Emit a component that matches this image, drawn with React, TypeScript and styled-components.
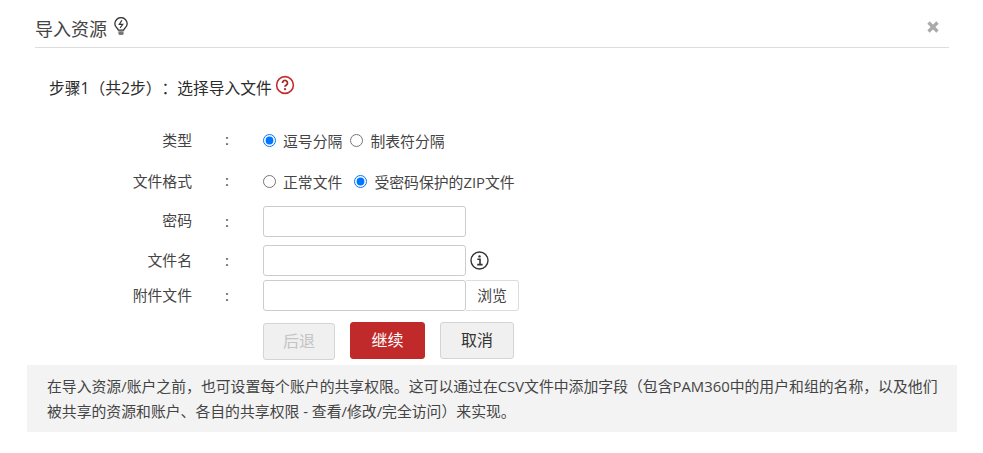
import React from "react";
import styled, { createGlobalStyle } from "styled-components";

const Global = createGlobalStyle`
  html, body { margin: 0; padding: 0; background: #fff; }
  body { font-family: "Open Sans", "Noto Sans CJK SC", sans-serif; font-size: 14.85px; color: #333; text-spacing-trim: space-all; }
`;
const Page = styled.div`
  width: 983px; height: 453px; overflow: hidden; position: relative; box-sizing: border-box;
  padding: 0 26px 0 27px;
`;
const Header = styled.header`
  margin: 0 8px; height: 48px; box-sizing: border-box; border-bottom: 1px solid #ddd;
  display: flex; align-items: flex-start; padding-top: 16px; justify-content: space-between;
`;
const Title = styled.h1`
  margin: 0; font-size: 18px; font-weight: 400; line-height: 26px; color: #444;
  display: flex; align-items: flex-start; gap: 7px;
`;
const BulbIcon = styled.svg`
  margin-top: 1px;
`;
const Close = styled.span`
  display: flex; margin: 5px 10px 0 0; color: #aaa;
`;
const Step = styled.div`
  margin: 26px 0 0 22px; height: 28px; display: flex; align-items: flex-start; gap: 3px;
  font-size: 15.75px; line-height: 28px; color: #2c2c2c;
`;
const HelpIcon = styled.svg`
  margin-top: 1px;
`;
const Form = styled.div`
  margin-top: 26px; display: grid; grid-template-columns: 165px 71px 1fr;
`;
const Row = styled.div<{ $h: number; $top?: number }>`
  display: contents;
  & > * { height: ${(p) => p.$h}px; margin-top: ${(p) => p.$top ?? 0}px; display: flex; align-items: center; }
`;
const Label = styled.div<{ $lift: number }>`
  justify-content: flex-end; color: #444; line-height: 20px; padding-bottom: ${(p) => p.$lift}px; box-sizing: border-box;
`;
const Colon = styled.div`
  padding: 0 0 2px 33px; color: #444; box-sizing: border-box;
`;
const Field = styled.div`
  gap: 0;
`;
const RadioLabel = styled.label<{ $gap: number }>`
  display: inline-flex; align-items: center; margin-right: ${(p) => p.$gap}px; color: #444; white-space: nowrap;
`;
const Radio = styled.input.attrs({ type: "radio" })`
  margin: 0 7px 0 0; width: 13px; height: 13px; accent-color: #0075ff;
`;
const TextInput = styled.input`
  width: 203px; height: 31px; box-sizing: border-box; border: 1px solid #ccc; border-radius: 3px;
  padding: 0 6px; background: #fff; outline: none;
`;
const Browse = styled.button`
  width: 53px; height: 31px; box-sizing: border-box; border: 1px solid #ddd; border-left: 0;
  border-radius: 0 3px 3px 0; background: #fff; color: #444; font: inherit; padding: 0 0 3px;
`;
const InfoIcon = styled.svg`
  margin-left: 4px; flex: none;
`;
const Actions = styled.div`
  grid-column: 3; margin-top: 11px; display: flex; gap: 15px; align-items: flex-start; height: 38px;
`;
const Btn = styled.button<{ $w: number; $kind: "off" | "primary" | "plain" }>`
  width: ${(p) => p.$w}px; height: 37px; box-sizing: border-box; border-radius: 3px; font: inherit; font-size: 16px; padding: 0 0 3px;
  margin-top: ${(p) => (p.$kind === "off" ? "1px" : "0")};
  background: ${(p) => (p.$kind === "primary" ? "#c12a2a" : "#f0f0f0")};
  color: ${(p) => (p.$kind === "primary" ? "#fff" : p.$kind === "off" ? "#c4c4c4" : "#333")};
  border: 1px solid ${(p) => (p.$kind === "primary" ? "#c12a2a" : "#d4d4d4")};
`;
const Note = styled.div`
  margin-top: 5px; width: 930px; height: 67px; box-sizing: border-box; background: #f3f3f3;
  padding: 9px 10px 9px 20px; line-height: 25px; color: #444;
`;

export default function App() {
  return (
    <Page>
      <Global />
      <Header>
        <Title>
          导入资源
          <BulbIcon width="14" height="19" viewBox="0 0 14 19" fill="none" stroke="#333" strokeWidth="1.3">
            <path d="M4.4 13.2C4.4 11.4.8 10.6.8 6.8a6.2 6.2 0 0 1 12.4 0c0 3.8-3.6 4.6-3.6 6.4z" />
            <path d="M4.4 14.2h5.2v2.2a1.6 1.6 0 0 1-1.6 1.6H6a1.6 1.6 0 0 1-1.6-1.6z" fill="#777" stroke="none" />
            <path d="M7.9 3.2 5.3 7.4h3.4L6.1 11" strokeWidth="1.2" />
          </BulbIcon>
        </Title>
        <Close>
          <svg width="12" height="12" viewBox="0 0 12 12" stroke="currentColor" strokeWidth="3.2">
            <path d="M1.5 1.5l9 9M10.5 1.5l-9 9" />
          </svg>
        </Close>
      </Header>
      <Step>
        步骤1（共2步）：选择导入文件
        <HelpIcon width="20" height="20" viewBox="0 0 20 20" fill="none">
          <circle cx="10" cy="10" r="8.4" stroke="#c12f2f" strokeWidth="1.6" />
          <path d="M7.5 8a2.5 2.5 0 1 1 3.8 2.1c-.9.5-1.3.9-1.3 1.7" stroke="#a52a2a" strokeWidth="1.8" />
          <circle cx="10" cy="14.2" r="1.1" fill="#a52a2a" />
        </HelpIcon>
      </Step>
      <Form>
        <Row $h={24}>
          <Label $lift={0}>类型</Label>
          <Colon>:</Colon>
          <Field>
            <RadioLabel $gap={8}><Radio name="sep" defaultChecked />逗号分隔</RadioLabel>
            <RadioLabel $gap={8}><Radio name="sep" />制表符分隔</RadioLabel>
          </Field>
        </Row>
        <Row $h={24} $top={17}>
          <Label $lift={0}>文件格式</Label>
          <Colon>:</Colon>
          <Field>
            <RadioLabel $gap={12}><Radio name="fmt" />正常文件</RadioLabel>
            <RadioLabel $gap={8}><Radio name="fmt" defaultChecked />受密码保护的ZIP文件</RadioLabel>
          </Field>
        </Row>
        <Row $h={31} $top={13}>
          <Label $lift={4}>密码</Label>
          <Colon>:</Colon>
          <Field><TextInput type="text" /></Field>
        </Row>
        <Row $h={31} $top={8}>
          <Label $lift={2}>文件名</Label>
          <Colon>:</Colon>
          <Field>
            <TextInput type="text" />
            <InfoIcon width="19" height="19" viewBox="0 0 19 19" fill="none">
              <circle cx="9.5" cy="9.5" r="8.5" stroke="#333" strokeWidth="1.4" />
              <circle cx="9.5" cy="5.4" r="1.2" fill="#333" />
              <path d="M7.4 8.2H10v5.2M7.2 13.6h5.4" stroke="#333" strokeWidth="1.6" />
            </InfoIcon>
          </Field>
        </Row>
        <Row $h={31} $top={4}>
          <Label $lift={2}>附件文件</Label>
          <Colon>:</Colon>
          <Field>
            <TextInput type="text" />
            <Browse type="button">浏览</Browse>
          </Field>
        </Row>
        <Actions>
          <Btn type="button" $w={72} $kind="off">后退</Btn>
          <Btn type="button" $w={75} $kind="primary">继续</Btn>
          <Btn type="button" $w={74} $kind="plain">取消</Btn>
        </Actions>
      </Form>
      <Note>
        在导入资源/账户之前，也可设置每个账户的共享权限。这可以通过在CSV文件中添加字段（包含PAM360中的用户和组的名称，以及他们被共享的资源和账户、各自的共享权限 - 查看/修改/完全访问）来实现。
      </Note>
    </Page>
  );
}
